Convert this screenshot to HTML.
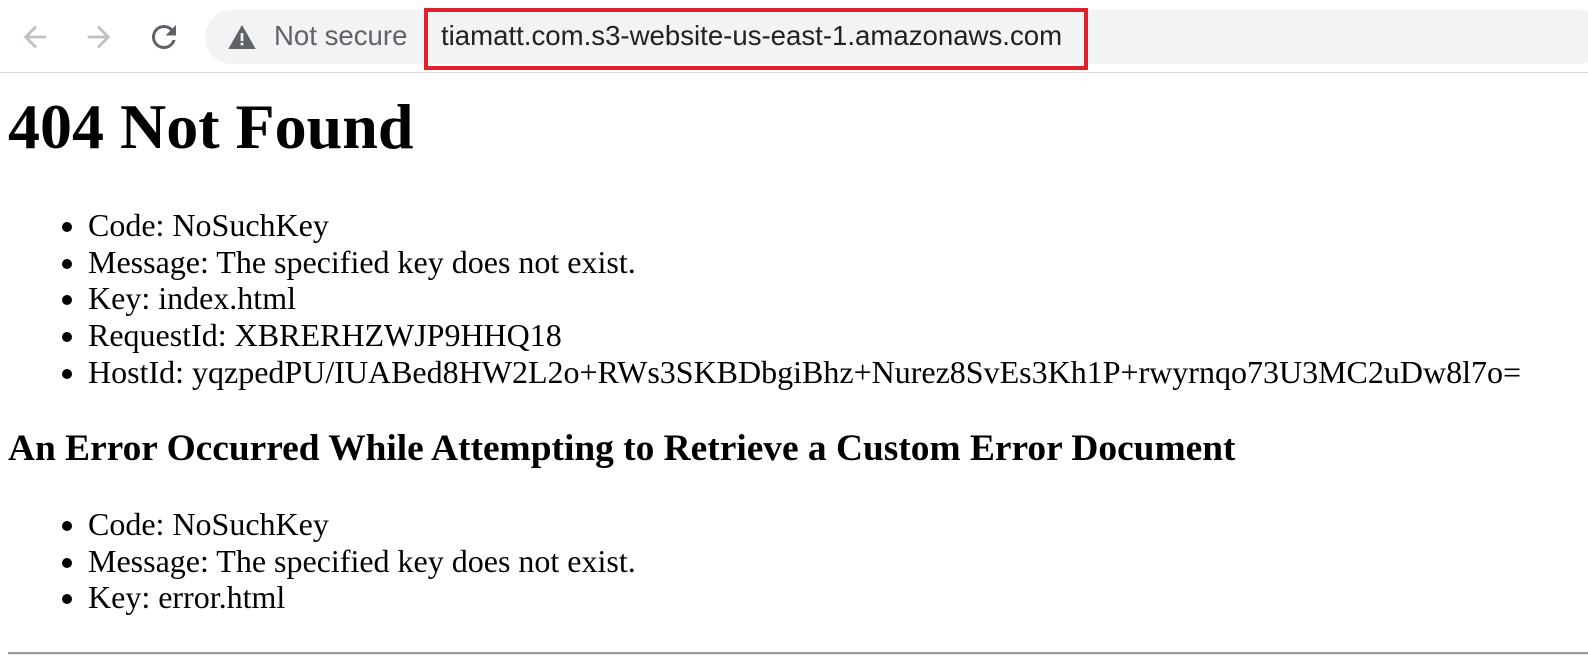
<!DOCTYPE html>
<html><head><style>
*{margin:0;padding:0;box-sizing:border-box}
html,body{width:1588px;height:666px;overflow:hidden;background:#fff}
.bar{position:absolute;left:0;top:0;width:1588px;height:73px;background:#fff;border-bottom:1px solid #dadce0}
.pill{position:absolute;left:205px;top:10px;width:1400px;height:54px;border-radius:27px;background:#f1f3f4}
.ns{position:absolute;left:274px;top:20px;font:27.6px "Liberation Sans",sans-serif;color:#5f6368}
.url{position:absolute;left:441px;top:20px;font:27.6px "Liberation Sans",sans-serif;color:#202124}
.red{position:absolute;left:424px;top:8px;width:664px;height:62px;border:4px solid #e0202c}
h1{position:absolute;left:8px;top:91px;font:bold 64px/72px "Liberation Serif",serif}
h3{position:absolute;left:8px;top:428px;font:bold 37.4px/42px "Liberation Serif",serif}
ul{position:absolute;left:8px;padding-left:80px;font:32px/36.7px "Liberation Serif",serif;list-style:disc}
hr{position:absolute;left:8px;top:652px;width:1580px;height:3px;border:0;border-top:2px solid #999;border-bottom:1px solid #eee}
</style></head><body>
<div class="bar">
<svg style="position:absolute;left:18px;top:20px" width="34" height="34" viewBox="0 0 24 24"><path d="M20 11H7.8l5.6-5.6L12 4l-8 8 8 8 1.4-1.4L7.8 13H20z" fill="#bdc1c6"/></svg>
<svg style="position:absolute;left:82px;top:20px" width="34" height="34" viewBox="0 0 24 24"><path d="M4 11h12.2l-5.6-5.6L12 4l8 8-8 8-1.4-1.4 5.6-5.6H4z" fill="#bdc1c6"/></svg>
<svg style="position:absolute;left:146px;top:19px" width="36" height="36" viewBox="0 0 24 24"><path d="M17.65 6.35A7.96 7.96 0 0 0 12 4a8 8 0 1 0 7.73 10h-2.08A6 6 0 1 1 12 6c1.66 0 3.14.69 4.22 1.78L13 11h7V4z" fill="#5f6368"/></svg>
<div class="pill"></div>
<svg style="position:absolute;left:228px;top:25px" width="28" height="24" viewBox="0 0 24 21"><path d="M12 0L0 21h24z" fill="#5f6368"/><rect x="10.8" y="7" width="2.4" height="7" fill="#f1f3f4"/><rect x="10.8" y="15.5" width="2.4" height="2.4" fill="#f1f3f4"/></svg>
<div class="ns">Not secure</div>
<div class="url">tiamatt.com.s3-website-us-east-1.amazonaws.com</div>
<div class="red"></div>
</div>
<h1>404 Not Found</h1>
<ul style="top:207px">
<li>Code: NoSuchKey</li>
<li>Message: The specified key does not exist.</li>
<li>Key: index.html</li>
<li>RequestId: XBRERHZWJP9HHQ18</li>
<li>HostId: yqzpedPU/IUABed8HW2L2o+RWs3SKBDbgiBhz+Nurez8SvEs3Kh1P+rwyrnqo73U3MC2uDw8l7o=</li>
</ul>
<h3>An Error Occurred While Attempting to Retrieve a Custom Error Document</h3>
<ul style="top:506px">
<li>Code: NoSuchKey</li>
<li>Message: The specified key does not exist.</li>
<li>Key: error.html</li>
</ul>
<hr>
</body></html>
